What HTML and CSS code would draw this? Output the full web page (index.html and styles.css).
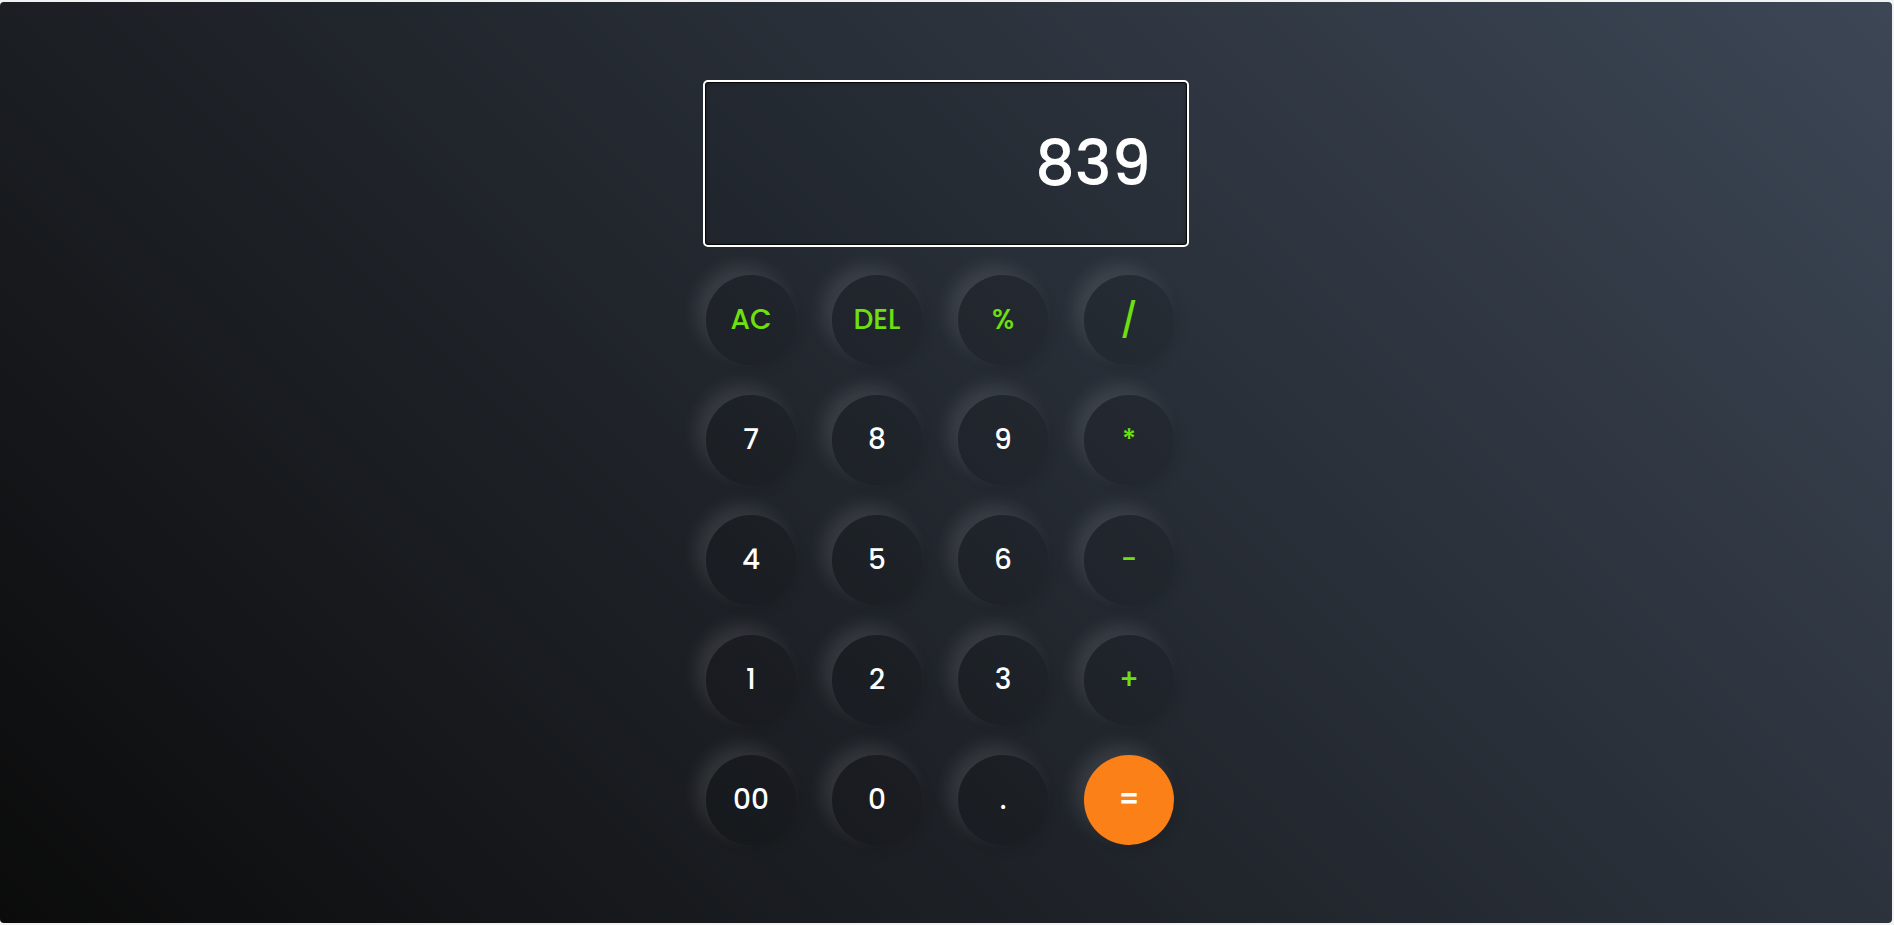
FILE: index.html
```html
<!DOCTYPE html>
<html lang="en">
<head>
<meta charset="utf-8">
<title>Calculator</title>
<link rel="stylesheet" href="styles.css">
</head>
<body>
<main class="page">
  <section class="calculator">
    <div class="display"><span class="display-value">839</span></div>
    <div class="keys">
      <button class="key key-op">AC</button>
      <button class="key key-op">DEL</button>
      <button class="key key-op">%</button>
      <button class="key key-op key-slash">/</button>
      <button class="key">7</button>
      <button class="key">8</button>
      <button class="key">9</button>
      <button class="key key-op">*</button>
      <button class="key">4</button>
      <button class="key">5</button>
      <button class="key">6</button>
      <button class="key key-op">-</button>
      <button class="key">1</button>
      <button class="key">2</button>
      <button class="key">3</button>
      <button class="key key-op">+</button>
      <button class="key">00</button>
      <button class="key">0</button>
      <button class="key">.</button>
      <button class="key key-equals">=</button>
    </div>
  </section>
</main>
</body>
</html>
```
FILE: styles.css
```css
* {
  box-sizing: border-box;
}

html, body {
  margin: 0;
  padding: 0;
  background: #f2f2f2;
}

body {
  font-family: "Poppins", Inter, "Noto Sans", sans-serif;
}

.page {
  margin-top: 2px;
  width: calc(100% - 2px);
  height: 921px;
  border-radius: 4px;
  background: linear-gradient(45deg, #0b0b0b 0%, #3c4655 100%);
  display: flex;
  align-items: center;
  justify-content: center;
}

.calculator {
  width: 486px;
  display: flex;
  flex-direction: column;
  gap: 28px;
}

.display {
  height: 167px;
  border: 2px solid #ffffff;
  border-radius: 5px;
  background: rgba(0, 0, 0, 0.06);
  box-shadow: inset 0 0 0 1px rgba(0, 0, 0, 0.75), inset 0 0 4px rgba(0, 0, 0, 0.5);
  display: flex;
  align-items: center;
  justify-content: flex-end;
  padding-right: 36px;
}

.display-value {
  color: #ffffff;
  font-size: 62px;
  font-weight: 500;
}

.keys {
  display: grid;
  grid-template-columns: repeat(4, 90px);
  grid-auto-rows: 90px;
  column-gap: 36px;
  row-gap: 30px;
  padding-left: 3px;
}

.key {
  width: 90px;
  height: 90px;
  border: none;
  border-radius: 50%;
  background: rgba(0, 0, 0, 0.1);
  color: #ffffff;
  font-family: inherit;
  font-size: 28px;
  font-weight: 500;
  display: flex;
  align-items: center;
  justify-content: center;
  padding: 0;
  box-shadow: -9px -9px 18px rgba(255, 255, 255, 0.11), 4px 4px 12px rgba(0, 0, 0, 0.1);
}

.key-op {
  color: #6ee010;
}

.key-slash {
  font-size: 34px;
}

.key-equals {
  background: #fb8017;
  color: #ffffff;
  font-weight: 600;
}
```
